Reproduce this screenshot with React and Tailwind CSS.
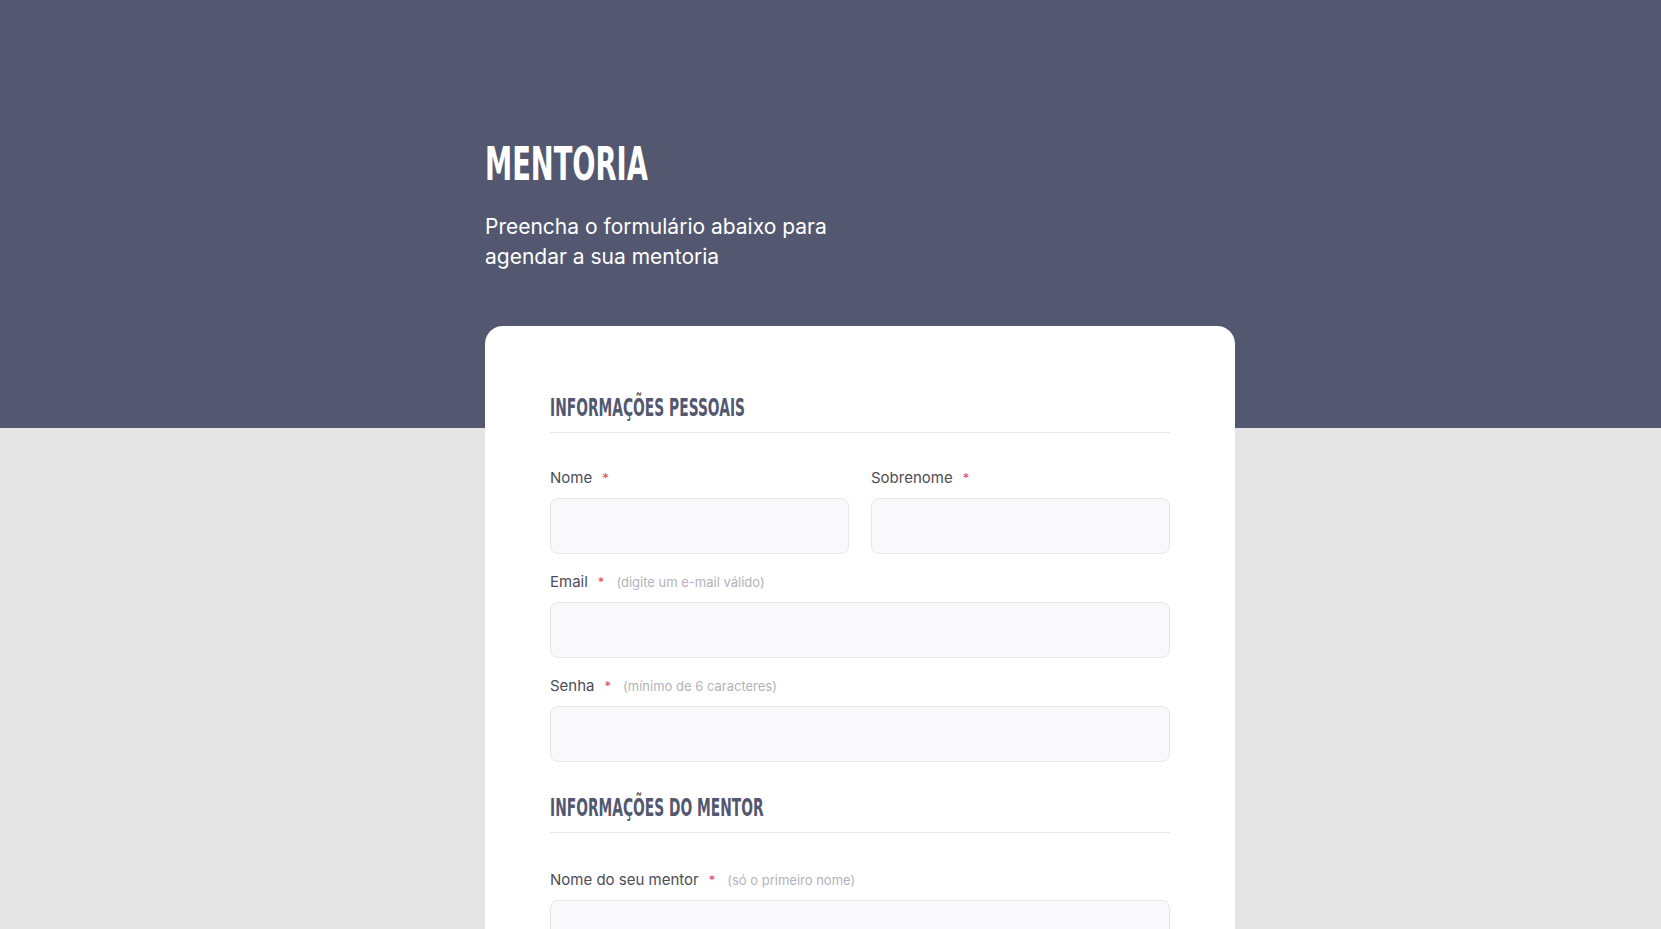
const headingFont = {
  fontFamily: '"DejaVu Sans Condensed", "Liberation Sans", sans-serif',
};

const Field = ({ label, hint }) => (
  <div className="flex flex-col">
    <label className="flex items-center h-[20px] mb-[10px] text-[15px] leading-[20px] text-[#4d4d55]">
      <span>{label}</span>
      <span className="ml-[10px] text-[13px] text-[#e8455e]">*</span>
      {hint && (
        <span className="ml-[12px] text-[13px] text-[#b3b3ba]">{hint}</span>
      )}
    </label>
    <input
      type="text"
      className="h-[56px] w-full rounded-lg border border-[#e6e7ec] bg-[#f9f9fb] px-4 outline-none"
    />
  </div>
);

const SectionTitle = ({ children }) => (
  <div className="border-b border-[#e6e7ea] pb-[10px]">
    <h3
      className="inline-block origin-left scale-x-[0.64] whitespace-nowrap text-[24px] leading-[25px] font-bold uppercase text-[#535870]"
      style={headingFont}
    >
      {children}
    </h3>
  </div>
);

export default function App() {
  return (
    <div
      className="min-h-screen bg-[linear-gradient(to_bottom,#535870_428px,#e5e5e5_428px)] pb-20"
      style={{ fontFamily: 'Inter, "Open Sans", sans-serif' }}
    >
      <div className="ml-[485px] w-[750px] pt-[140px]">
        <h1
          className="inline-block origin-left scale-x-[0.66] text-[46px] leading-[48px] font-bold text-white"
          style={headingFont}
        >
          MENTORIA
        </h1>
        <p className="mt-[24px] text-[21px] leading-[30px] text-white">
          Preencha o formulário abaixo para
          <br />
          agendar a sua mentoria
        </p>

        <div className="mt-[54px] rounded-[18px] bg-white px-[65px] pt-[70px] pb-16">
          <SectionTitle>Informações pessoais</SectionTitle>

          <div className="mt-[35px] flex flex-col gap-[18px]">
            <div className="grid grid-cols-2 gap-[22px]">
              <Field label="Nome" />
              <Field label="Sobrenome" />
            </div>
            <Field label="Email" hint="(digite um e-mail válido)" />
            <Field label="Senha" hint="(mínimo de 6 caracteres)" />
          </div>

          <div className="mt-[34px]">
            <SectionTitle>Informações do mentor</SectionTitle>
          </div>

          <div className="mt-[37px] flex flex-col gap-[18px]">
            <Field label="Nome do seu mentor" hint="(só o primeiro nome)" />
            <Field label="Área da mentoria" />
          </div>
        </div>
      </div>
    </div>
  );
}
